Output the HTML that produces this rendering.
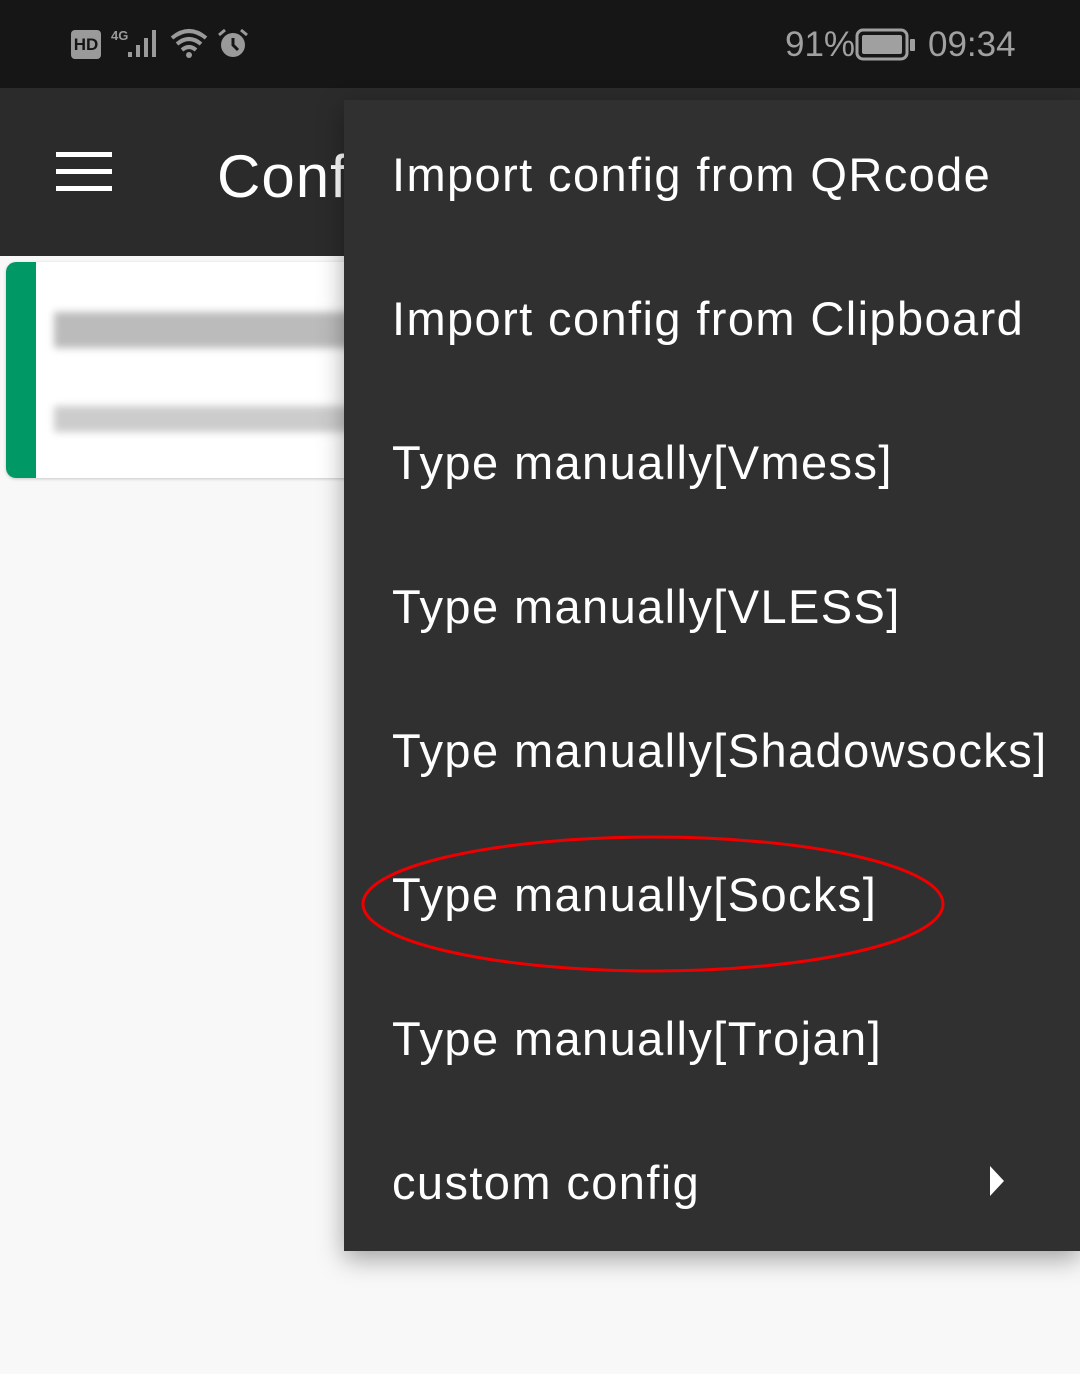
<!DOCTYPE html>
<html><head><meta charset="utf-8"><style>
body{margin:0;width:1080px;height:1374px;background:#f8f8f8;position:relative;overflow:hidden;font-family:"Liberation Sans","DejaVu Sans",sans-serif}
.sb{position:absolute;left:0;top:0;width:1080px;height:88px;background:#161616}
.ab{position:absolute;left:0;top:88px;width:1080px;height:168px;background:#2b2b2b}
.ham{position:absolute;left:56px;height:5px;width:56px;background:#fff}
.title{position:absolute;left:217px;top:142px;font-size:60px;color:#fff;letter-spacing:1px}
.card{position:absolute;left:6px;top:262px;width:360px;height:216px;background:#fff;border-radius:10px;box-shadow:0 1px 3px rgba(0,0,0,.2);overflow:hidden}
.card .g{position:absolute;left:0;top:0;width:30px;height:216px;background:#009966}
.blur{position:absolute;background:#bbb;filter:blur(4px)}
.menu{position:absolute;left:344px;top:100px;width:736px;height:1151px;background:#303030;box-shadow:0 8px 24px rgba(0,0,0,.35)}
.it{position:absolute;left:48px;font-size:47px;color:#fff;line-height:60px;white-space:nowrap;letter-spacing:1.4px}
</style></head><body>
<div class="sb"></div>
<div style="position:absolute;left:71px;top:30px;width:30px;height:29px;background:#9a9a9a;border-radius:4px;color:#161616;font:bold 17px 'Liberation Sans';text-align:center;line-height:29px">HD</div>
<div style="position:absolute;left:111px;top:28px;color:#9a9a9a;font:bold 13px 'Liberation Sans'">4G</div>
<svg style="position:absolute;left:128px;top:28px" width="36" height="32"><rect x="0" y="24" width="4" height="5" fill="#9a9a9a"/><rect x="8" y="17" width="4" height="12" fill="#9a9a9a"/><rect x="16" y="10" width="4" height="19" fill="#9a9a9a"/><rect x="24" y="2" width="4" height="27" fill="#9a9a9a"/></svg>
<svg style="position:absolute;left:170px;top:28px" width="40" height="32"><path d="M2 10 Q19 -4 36 10 M7 16 Q19 6 31 16 M12 22 Q19 16 26 22" stroke="#9a9a9a" stroke-width="4" fill="none"/><circle cx="19" cy="27" r="3" fill="#9a9a9a"/></svg>
<svg style="position:absolute;left:216px;top:28px" width="34" height="32"><circle cx="17" cy="17" r="12" fill="#9a9a9a"/><path d="M17 10 V17 L22 22" stroke="#161616" stroke-width="3" fill="none"/><path d="M3 7 L9 2 M31 7 L25 2" stroke="#9a9a9a" stroke-width="3"/></svg>
<div style="position:absolute;left:785px;top:25px;color:#a0a0a0;font-size:35px">91%</div>
<svg style="position:absolute;left:855px;top:28px" width="62" height="34"><rect x="2" y="2" width="50" height="29" rx="6" stroke="#a0a0a0" stroke-width="3" fill="none"/><rect x="7" y="7" width="40" height="19" rx="2" fill="#a0a0a0"/><rect x="55" y="11" width="5" height="12" rx="1" fill="#a0a0a0"/></svg>
<div style="position:absolute;left:928px;top:25px;color:#a0a0a0;font-size:35px">09:34</div>
<div class="ab"></div>
<div class="ham" style="top:152px"></div><div class="ham" style="top:169px"></div><div class="ham" style="top:186px"></div>
<div class="title">Conf</div>
<div class="card"><div class="g"></div>
<div class="blur" style="left:48px;top:50px;width:300px;height:36px"></div>
<div class="blur" style="left:48px;top:144px;width:300px;height:26px;background:#ccc"></div></div>
<div class="menu">
<div class="it" style="top:45px">Import config from QRcode</div>
<div class="it" style="top:189px">Import config from Clipboard</div>
<div class="it" style="top:333px">Type manually[Vmess]</div>
<div class="it" style="top:477px">Type manually[VLESS]</div>
<div class="it" style="top:621px">Type manually[Shadowsocks]</div>
<div class="it" style="top:765px">Type manually[Socks]</div>
<div class="it" style="top:909px">Type manually[Trojan]</div>
<div class="it" style="top:1053px">custom config</div>
<svg style="position:absolute;left:644px;top:1064px" width="20" height="34"><path d="M2 2 L16 17 L2 32Z" fill="#fff"/></svg>
</div>
<svg style="position:absolute;left:360px;top:834px" width="592" height="144"><ellipse cx="293" cy="70" rx="290" ry="67" stroke="#e00" stroke-width="3" fill="none"/></svg>
</body></html>
